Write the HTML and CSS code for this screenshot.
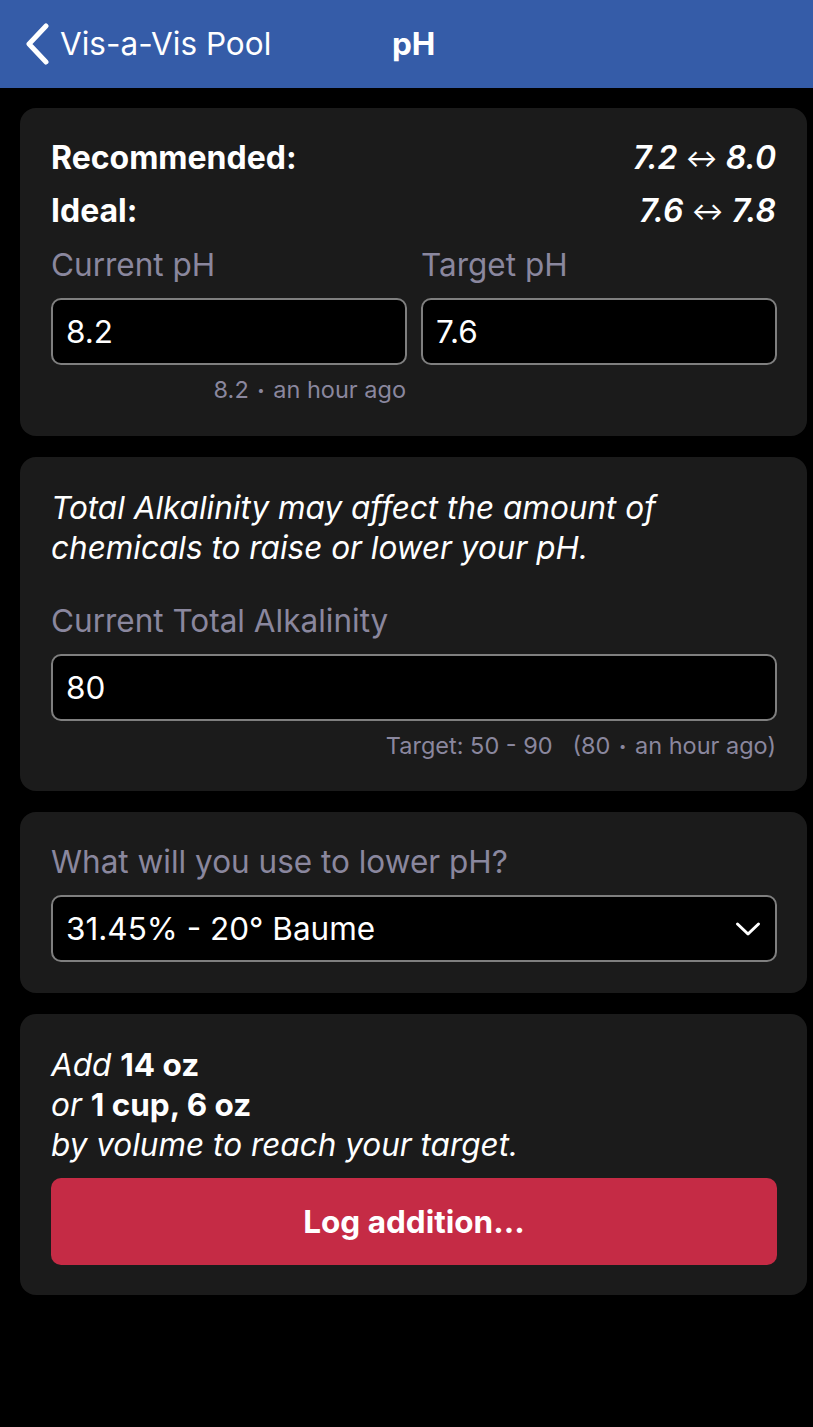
FILE: index.html
```html
<!DOCTYPE html>
<html lang="en">
<head>
<meta charset="utf-8">
<title>pH</title>
<link rel="stylesheet" href="styles.css">
</head>
<body>
<header class="nav">
  <div class="back">
    <svg class="back-icon" width="26" height="42" viewBox="0 0 26 42"><path d="M22 3 L5 21 L22 39" fill="none" stroke="#fff" stroke-width="5" stroke-linecap="round" stroke-linejoin="round"/></svg>
    <span class="back-text">Vis-a-Vis Pool</span>
  </div>
  <div class="title">pH</div>
</header>
<main class="content">
  <section class="card card-ranges">
    <div class="range-row"><span class="range-label">Recommended:</span><span class="range-value">7.2 <span class="arrow">↔</span> 8.0</span></div>
    <div class="range-row"><span class="range-label">Ideal:</span><span class="range-value">7.6 <span class="arrow">↔</span> 7.8</span></div>
    <div class="fields">
      <div class="field">
        <div class="label">Current pH</div>
        <div class="input">8.2</div>
        <div class="hint">8.2 <span class="dot">•</span> an hour ago</div>
      </div>
      <div class="field">
        <div class="label">Target pH</div>
        <div class="input">7.6</div>
      </div>
    </div>
  </section>
  <section class="card card-alk">
    <p class="note">Total Alkalinity may affect the amount of chemicals to raise or lower your pH.</p>
    <div class="label label-spaced">Current Total Alkalinity</div>
    <div class="input">80</div>
    <div class="hint">Target: 50 - 90 &nbsp; (80 <span class="dot">•</span> an hour ago)</div>
  </section>
  <section class="card card-select">
    <div class="label">What will you use to lower pH?</div>
    <div class="input select">
      <span>31.45% - 20° Baume</span>
      <svg class="chev" width="26" height="16" viewBox="0 0 26 16"><path d="M2.5 3 L13 13 L23.5 3" fill="none" stroke="#fff" stroke-width="3" stroke-linecap="round" stroke-linejoin="round"/></svg>
    </div>
  </section>
  <section class="card card-result">
    <div class="result">
      <div><i>Add</i> <b>14 oz</b></div>
      <div><i>or</i> <b>1 cup, 6 oz</b></div>
      <div><i>by volume to reach your target.</i></div>
    </div>
    <button class="log-btn">Log addition...</button>
  </section>
</main>
</body>
</html>
```
FILE: styles.css
```css
* { box-sizing: border-box; }
html, body { margin: 0; padding: 0; background: #000; }
body {
  font-family: Inter, "Noto Sans", "Liberation Sans", sans-serif;
  color: #fff;
  width: 813px;
  min-height: 1427px;
}
.nav {
  height: 88px;
  background: #355ca8;
  display: flex;
  align-items: center;
  padding-left: 24px;
}
.back {
  display: flex;
  align-items: center;
  gap: 10px;
  width: 368px;
}
.back-icon { display: block; }
.back-text { font-size: 31.5px; font-weight: 400; line-height: 40px; }
.title { font-size: 31.5px; font-weight: 700; line-height: 40px; }
.content {
  padding: 20px 6px 0 20px;
  display: flex;
  flex-direction: column;
  gap: 21px;
}
.card {
  background: #1b1b1b;
  border-radius: 16px;
  padding: 30px 30px 30px 31px;
}
.card-ranges { padding-top: 24px; padding-bottom: 31px; }
.card-alk { padding-top: 31px; padding-bottom: 30px; }
.card-select { padding-top: 28px; padding-bottom: 31px; }
.card-result { padding-top: 31px; }
.range-row {
  display: flex;
  justify-content: space-between;
  font-size: 32px;
  line-height: 52px;
}
.range-label { font-weight: 700; }
.range-value { font-weight: 600; font-style: italic; padding-right: 1px; }
.arrow { font-size: 24px; font-style: normal; font-weight: 500; vertical-align: 2px; }
.fields {
  display: grid;
  grid-template-columns: 1fr 1fr;
  column-gap: 14px;
  margin-top: 5px;
}
.label {
  color: #8a879e;
  font-size: 31.5px;
  line-height: 44px;
  margin-bottom: 11px;
}
.label-spaced { margin-top: 31px; }
.input {
  height: 67px;
  background: #000;
  border: 2px solid #7f7f7f;
  border-radius: 10px;
  display: flex;
  align-items: center;
  padding: 0 13px;
  font-size: 31.5px;
}
.hint {
  color: #8a879e;
  font-size: 23.5px;
  line-height: 30px;
  text-align: right;
  margin-top: 10px;
  padding-right: 1px;
}
.dot { font-size: 13px; vertical-align: 3px; padding: 0 2px; }
.note {
  margin: 0;
  font-size: 31.5px;
  font-style: italic;
  line-height: 40px;
}
.select { justify-content: space-between; padding-right: 14px; }
.chev { display: block; }
.result {
  font-size: 31.5px;
  line-height: 40px;
}
.result b { font-weight: 700; }
.log-btn {
  margin-top: 13px;
  width: 100%;
  height: 87px;
  background: #c52b45;
  border: none;
  border-radius: 10px;
  color: #fff;
  font-family: inherit;
  font-size: 31.5px;
  font-weight: 700;
  display: block;
}
```
